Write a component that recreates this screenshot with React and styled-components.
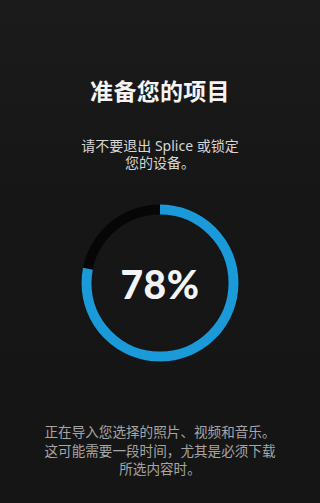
import styled, { createGlobalStyle } from "styled-components";

const GlobalStyle = createGlobalStyle`
  html, body {
    margin: 0;
    padding: 0;
    background: #171717;
  }
  * { box-sizing: border-box; }
`;

const Screen = styled.div`
  width: 320px;
  height: 503px;
  overflow: hidden;
  background: linear-gradient(#1b1b1b, #161616 40%, #151515);
  display: flex;
  flex-direction: column;
  align-items: center;
  padding-top: 77px;
  font-family: "Noto Sans", "Noto Sans CJK SC", sans-serif;
  text-align: center;
`;

const Title = styled.h1`
  margin: 0;
  font-size: 23px;
  line-height: 28px;
  font-weight: 700;
  color: #f4f4f4;
  letter-spacing: 0.3px;
`;

const Subtitle = styled.p`
  margin: 32px 0 0;
  font-size: 14px;
  line-height: 17px;
  color: #d6d6d6;
`;

const RingWrap = styled.div`
  margin-top: 32px;
  width: 160px;
  height: 160px;
  display: grid;
  place-items: center;
  & > * {
    grid-area: 1 / 1;
  }
`;

const Percent = styled.span`
  font-family: Lato, "Noto Sans", sans-serif;
  font-weight: 900;
  font-size: 39px;
  color: #f2f4f5;
  letter-spacing: 0.5px;
  margin-top: 2px;
`;

const Note = styled.p`
  margin: 60px 0 0;
  font-size: 13.6px;
  line-height: 18.5px;
  color: #a6a6a6;
`;

const Ring = ({ value }) => {
  const r = 73.5;
  const c = 2 * Math.PI * r;
  return (
    <svg width="160" height="160" viewBox="0 0 160 160">
      <circle cx="80" cy="80" r={r} fill="none" stroke="#060606" strokeWidth="10" />
      <circle
        cx="80"
        cy="80"
        r={r}
        fill="none"
        stroke="#1a9ad8"
        strokeWidth="10"
        strokeDasharray={`${(c * value) / 100} ${c}`}
        transform="rotate(-90 80 80)"
      />
    </svg>
  );
};

export default function App() {
  const progress = 78;
  return (
    <>
      <GlobalStyle />
      <Screen>
        <Title>准备您的项目</Title>
        <Subtitle>
          请不要退出 Splice 或锁定
          <br />
          您的设备。
        </Subtitle>
        <RingWrap>
          <Ring value={progress} />
          <Percent>{progress}%</Percent>
        </RingWrap>
        <Note>
          正在导入您选择的照片、视频和音乐。
          <br />
          这可能需要一段时间，尤其是必须下载
          <br />
          所选内容时。
        </Note>
      </Screen>
    </>
  );
}
